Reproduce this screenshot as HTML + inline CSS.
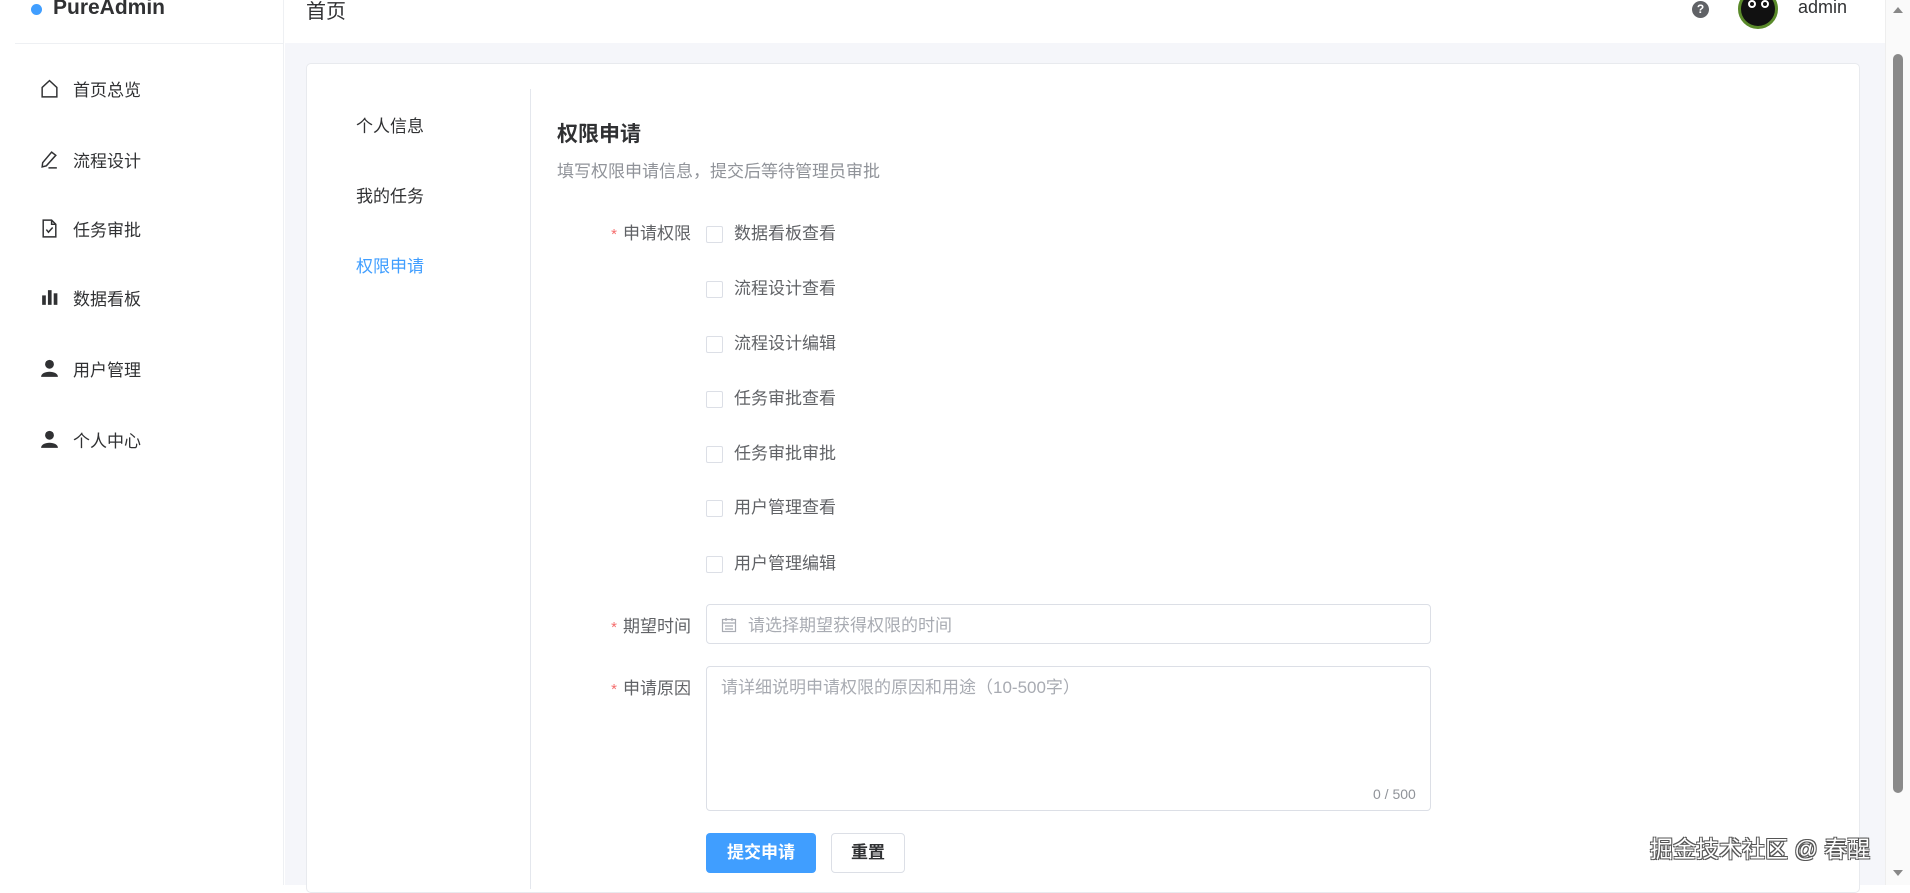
<!DOCTYPE html>
<html><head><meta charset="utf-8"><style>
*{box-sizing:border-box;margin:0;padding:0}
body{width:1910px;height:885px;overflow:hidden;background:#fff;font-family:"Liberation Sans","Noto Sans CJK SC",sans-serif;color:#303133;position:relative}
.abs{position:absolute}
.side{left:0;top:0;width:284px;height:885px;background:#fff;border-right:1px solid #eef0f3}
.menu{left:39px;font-size:17px;color:#303133;display:flex;align-items:center;height:24px}
.menu svg{width:21px;height:21px;margin-right:13px}
.main{left:285px;top:43px;width:1600px;height:842px;background:#f5f6fa}
.card{left:306px;top:63px;width:1554px;height:830px;background:#fff;border:1px solid #e8eaee;border-radius:5px}
.tab{left:356px;font-size:17px;color:#303133}
.lbl{font-size:17px;color:#606266;text-align:right;width:150px;left:541px}
.lbl b{color:#f56c6c;font-weight:normal;margin-right:6px;font-size:15px}
.cb{left:706px;width:17px;height:17px;border:1px solid #dcdfe6;border-radius:2px;background:#fff}
.cbt{left:734px;font-size:17px;color:#606266}
</style></head><body>
<div class="abs side"></div>
<div class="abs" style="left:15px;top:43px;width:269px;border-top:1px solid #eef0f3"></div>
<div class="abs" style="left:31px;top:4px;width:11px;height:11px;border-radius:50%;background:#409eff"></div>
<div class="abs" style="left:53px;top:-4px;font-size:21px;font-weight:bold;color:#303133">PureAdmin</div>
<div class="abs" style="left:306px;top:-5px;font-size:20px;color:#303133">首页</div>
<div class="abs" style="left:285px;top:43px;width:1600px;border-top:1px solid #eef0f3"></div>
<div class="abs main"></div>

<div class="abs menu" style="top:76px"><svg viewBox="0 0 20 20" fill="none" stroke="#303133" stroke-width="1.4"><path d="M3 9 L10 2.5 L17 9 V18 H3 Z"/></svg>首页总览</div>
<div class="abs menu" style="top:147px"><svg viewBox="0 0 20 20" fill="none" stroke="#303133" stroke-width="1.4"><path d="M12 3 L16 6 L7 16 L3 17 L3.5 13 Z M9 18 H17"/></svg>流程设计</div>
<div class="abs menu" style="top:216px"><svg viewBox="0 0 20 20" fill="none" stroke="#303133" stroke-width="1.4"><path d="M4 2 H12 L16 6 V18 H4 Z M12 2 V6 H16 M7 11 L9 13.5 L13 9"/></svg>任务审批</div>
<div class="abs menu" style="top:285px"><svg viewBox="0 0 20 20" fill="#303133"><rect x="3" y="8" width="3.5" height="9"/><rect x="8.5" y="3" width="3.5" height="14"/><rect x="14" y="6" width="3.5" height="11"/></svg>数据看板</div>
<div class="abs menu" style="top:356px"><svg viewBox="0 0 20 20" fill="#303133"><circle cx="10" cy="6" r="4.2"/><path d="M2 18 C2 11.5 18 11.5 18 18 Z"/></svg>用户管理</div>
<div class="abs menu" style="top:427px"><svg viewBox="0 0 20 20" fill="#303133"><circle cx="10" cy="6" r="4.2"/><path d="M2 18 C2 11.5 18 11.5 18 18 Z"/></svg>个人中心</div>

<div class="abs" style="left:1692px;top:1px;width:17px;height:17px;border-radius:50%;background:#606266;color:#fff;font-size:12px;font-weight:bold;text-align:center;line-height:17px">?</div>
<div class="abs" style="left:1738px;top:-11px;width:40px;height:40px;border-radius:50%;background:#111;border:3px solid #5a8a2a"></div>
<div class="abs" style="left:1748px;top:0px;width:8px;height:8px;border-radius:50%;border:2px solid #fff"></div>
<div class="abs" style="left:1761px;top:0px;width:8px;height:8px;border-radius:50%;border:2px solid #fff"></div>
<div class="abs" style="left:1798px;top:-3px;font-size:18px;color:#303133">admin</div>

<div class="abs card"></div>
<div class="abs" style="left:530px;top:89px;height:800px;border-left:1px solid #e4e7ed"></div>
<div class="abs tab" style="top:112px">个人信息</div>
<div class="abs tab" style="top:182px">我的任务</div>
<div class="abs tab" style="top:252px;color:#409eff">权限申请</div>

<div class="abs" style="left:557px;top:118px;font-size:21px;font-weight:bold;color:#303133">权限申请</div>
<div class="abs" style="left:557px;top:157px;font-size:17px;color:#909399">填写权限申请信息，提交后等待管理员审批</div>

<div class="abs lbl" style="top:219px"><b>*</b>申请权限</div>
<div class="abs cb" style="top:226px"></div><div class="abs cbt" style="top:219px">数据看板查看</div>
<div class="abs cb" style="top:281px"></div><div class="abs cbt" style="top:274px">流程设计查看</div>
<div class="abs cb" style="top:336px"></div><div class="abs cbt" style="top:329px">流程设计编辑</div>
<div class="abs cb" style="top:391px"></div><div class="abs cbt" style="top:384px">任务审批查看</div>
<div class="abs cb" style="top:446px"></div><div class="abs cbt" style="top:439px">任务审批审批</div>
<div class="abs cb" style="top:500px"></div><div class="abs cbt" style="top:493px">用户管理查看</div>
<div class="abs cb" style="top:556px"></div><div class="abs cbt" style="top:549px">用户管理编辑</div>

<div class="abs lbl" style="top:612px"><b>*</b>期望时间</div>
<div class="abs" style="left:706px;top:604px;width:725px;height:40px;border:1px solid #dcdfe6;border-radius:4px"></div>
<svg class="abs" style="left:721px;top:617px" width="16" height="16" viewBox="0 0 16 16" fill="none" stroke="#a8abb2" stroke-width="1.2"><rect x="1.5" y="2.5" width="13" height="12"/><path d="M1.5 6 H14.5 M5 1 V4 M11 1 V4 M4 9 H12 M4 12 H12"/></svg>
<div class="abs" style="left:748px;top:611px;font-size:17px;color:#a8abb2">请选择期望获得权限的时间</div>

<div class="abs lbl" style="top:674px"><b>*</b>申请原因</div>
<div class="abs" style="left:706px;top:666px;width:725px;height:145px;border:1px solid #dcdfe6;border-radius:4px"></div>
<div class="abs" style="left:721px;top:673px;font-size:17px;color:#a8abb2">请详细说明申请权限的原因和用途（10-500字）</div>
<div class="abs" style="left:1373px;top:786px;font-size:14px;color:#909399">0 / 500</div>

<div class="abs" style="left:706px;top:833px;width:110px;height:40px;background:#409eff;border-radius:4px;color:#fff;font-size:17px;font-weight:bold;text-align:center;line-height:40px">提交申请</div>
<div class="abs" style="left:831px;top:833px;width:74px;height:40px;border:1px solid #dcdfe6;border-radius:4px;color:#303133;font-size:17px;font-weight:bold;text-align:center;line-height:38px">重置</div>

<div class="abs" style="left:1650px;top:830px;font-size:23px;color:#fff;text-shadow:1px 1px 0 #555,-1px -1px 0 #555,1px -1px 0 #555,-1px 1px 0 #555">掘金技术社区 @ 春醒</div>

<div class="abs" style="left:1885px;top:0;width:25px;height:885px;background:#fafafa;border-left:1px solid #eee"></div>
<div class="abs" style="left:1893px;top:7px;width:0;height:0;border-left:5px solid transparent;border-right:5px solid transparent;border-bottom:6px solid #888"></div>
<div class="abs" style="left:1893px;top:54px;width:10px;height:739px;background:#8a8a8a;border-radius:5px"></div>
<div class="abs" style="left:1893px;top:870px;width:0;height:0;border-left:5px solid transparent;border-right:5px solid transparent;border-top:6px solid #888"></div>
</body></html>
